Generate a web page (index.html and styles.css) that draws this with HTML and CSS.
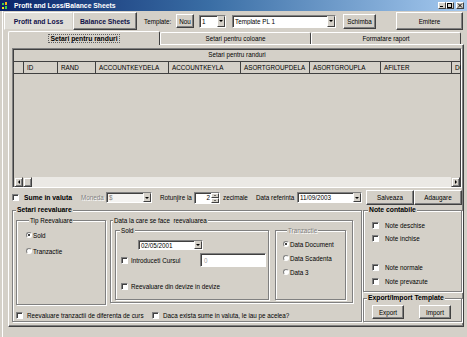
FILE: index.html
```html
<!DOCTYPE html>
<html lang="ro">
<head>
    <meta charset="UTF-8">
    <title>Profit and Loss/Balance Sheets</title>
    <link rel="stylesheet" href="styles.css">
</head>
<body>
<div class="window">
    <div class="titlebar">
        <svg class="app-icon" width="6" height="8" viewBox="0 0 6 8">
            <rect x="0" y="1" width="2" height="2" fill="#39d34a"/>
            <rect x="0" y="5" width="2" height="2" fill="#f2e21a"/>
            <rect x="3" y="0" width="2" height="3" fill="#f2b51a"/>
            <rect x="3" y="4" width="2" height="3" fill="#39d34a"/>
        </svg>
        <span class="title">Profit and Loss/Balance Sheets</span>
        <div class="win-controls">
            <span class="win-btn"><svg width="6" height="5" viewBox="0 0 6 5"><rect x="1" y="3" width="3" height="1" fill="#000"/></svg></span>
            <span class="win-btn"><svg width="6" height="5" viewBox="0 0 6 5"><rect x="0.5" y="0.5" width="4" height="4" fill="none" stroke="#000"/></svg></span>
            <span class="win-btn win-close"><svg width="6" height="5" viewBox="0 0 6 5"><path d="M1 0.5L5 4.5M5 0.5L1 4.5" stroke="#000" stroke-width="1"/></svg></span>
        </div>
    </div>

    <div class="toolbar">
        <button class="btn btn-pressed btn-profit">Profit and Loss</button>
        <button class="btn btn-balance">Balance Sheets</button>
        <span class="lbl lbl-template">Template:</span>
        <button class="btn btn-nou">Nou</button>
        <div class="combo combo-nr"><span class="combo-text">1</span><span class="drop"></span></div>
        <div class="combo combo-tpl"><span class="combo-text">Template PL 1</span><span class="drop"></span></div>
        <button class="btn btn-schimba">Schimba</button>
        <button class="btn btn-emitere">Emitere</button>
    </div>

    <div class="tabs">
        <div class="tab tab-active"><span class="tab-focus">Setari pentru randuri</span></div>
        <div class="tab tab-2">Setari pentru coloane</div>
        <div class="tab tab-3">Formatare raport</div>
    </div>

    <div class="panel">
        <div class="grid">
            <div class="grid-caption">Setari pentru randuri</div>
            <div class="grid-head">
                <div class="hc hc-ind"></div>
                <div class="hc hc-id">ID</div>
                <div class="hc hc-rand">RAND</div>
                <div class="hc hc-akd">ACCOUNTKEYDELA</div>
                <div class="hc hc-akl">ACCOUNTKEYLA</div>
                <div class="hc hc-agd">ASORTGROUPDELA</div>
                <div class="hc hc-agl">ASORTGROUPLA</div>
                <div class="hc hc-af">AFILTER</div>
                <div class="hc hc-do">DO</div>
            </div>
            <div class="grid-body"></div>
            <div class="hscroll">
                <span class="sb-btn"><span class="arrow-left"></span></span>
                <span class="sb-thumb"></span>
                <span class="sb-track"></span>
                <span class="sb-btn"><span class="arrow-right"></span></span>
            </div>
        </div>

        <div class="opts">
            <span class="chk"></span>
            <span class="bold lbl-sume">Sume in valuta</span>
            <span class="disabled lbl-moneda">Moneda</span>
            <div class="combo combo-off combo-moneda"><span class="combo-text">$</span><span class="drop"></span></div>
            <span class="lbl lbl-rot">Rotunjire la</span>
            <div class="spin"><span class="spin-text">2</span><span class="spin-btns"><span class="spin-up"></span><span class="spin-down"></span></span></div>
            <span class="lbl lbl-zec">zecimale</span>
            <span class="lbl lbl-data">Data referinta</span>
            <div class="combo combo-date"><span class="combo-text">11/09/2003</span><span class="drop"></span></div>
            <button class="btn btn-salveaza">Salveaza</button>
            <button class="btn btn-adaugare">Adaugare</button>
        </div>

        <div class="lower">
            <fieldset class="group reeval">
                <legend class="bold">Setari reevaluare</legend>
                <div class="reeval-top">
                    <fieldset class="group tip">
                        <legend>Tip Reevaluare</legend>
                        <div class="ropt"><span class="radio on"></span><span>Sold</span></div>
                        <div class="ropt"><span class="radio"></span><span>Tranzactie</span></div>
                    </fieldset>
                    <fieldset class="group dataf">
                        <legend>Data la care se face&nbsp; reevaluarea</legend>
                        <div class="dataf-inner">
                            <fieldset class="group sold">
                                <legend>Sold</legend>
                                <div class="combo combo-sold"><span class="combo-text">02/05/2001</span><span class="drop"></span></div>
                                <div class="sold-row">
                                    <span class="chk"></span>
                                    <span class="lbl-curs">Introduceti Cursul</span>
                                    <div class="field field-curs">0</div>
                                </div>
                                <div class="sold-row sold-row2">
                                    <span class="chk"></span>
                                    <span class="lbl-devize">Reevaluare din devize in devize</span>
                                </div>
                            </fieldset>
                            <fieldset class="group tranz">
                                <legend class="disabled">Tranzactie</legend>
                                <div class="ropt"><span class="radio on"></span><span>Data Document</span></div>
                                <div class="ropt"><span class="radio"></span><span>Data Scadenta</span></div>
                                <div class="ropt"><span class="radio"></span><span>Data 3</span></div>
                            </fieldset>
                        </div>
                    </fieldset>
                </div>
                <div class="reeval-bottom">
                    <div class="copt copt-diff"><span class="chk"></span><span>Reevaluare tranzactii de diferenta de curs</span></div>
                    <div class="copt"><span class="chk"></span><span>Daca exista sume in valuta, le iau pe acelea?</span></div>
                </div>
            </fieldset>

            <div class="side">
                <fieldset class="group note">
                    <legend class="bold">Note contabile</legend>
                    <div class="nopt n1"><span class="chk"></span><span>Note deschise</span></div>
                    <div class="nopt n2"><span class="chk"></span><span>Note inchise</span></div>
                    <div class="nopt n3"><span class="chk"></span><span>Note normale</span></div>
                    <div class="nopt n4"><span class="chk"></span><span>Note prevazute</span></div>
                </fieldset>
                <fieldset class="group expimp">
                    <legend class="bold">Export/Import Template</legend>
                    <div class="expimp-btns">
                        <button class="btn btn-small">Export</button>
                        <button class="btn btn-small">Import</button>
                    </div>
                </fieldset>
            </div>
        </div>
    </div>
</div>
</body>
</html>
```

FILE: styles.css
```css
* {
    box-sizing: border-box;
}
body {
    margin: 0;
    background-color: #d4d0c8;
    font-family: "Liberation Sans", Arial, sans-serif;
    font-size: 6.3px;
    color: #000;
}
.window {
    width: 467px;
    height: 337px;
    overflow: hidden;
    background: #d4d0c8;
    box-shadow: inset 2px 0 #d4d0c8, inset 3px 0 #fff;
}
.bold {
    font-weight: bold;
    font-size: 6.8px;
}
.disabled {
    color: #808080;
    text-shadow: 1px 1px #fff;
}

/* title bar */
.titlebar {
    height: 11px;
    display: flex;
    align-items: center;
    padding-left: 2px;
    background: linear-gradient(to right, #0a246a, #3a6ea5 45%, #a6caf0);
    color: #fff;
}
.app-icon {
    margin-right: 6px;
}
.title {
    font-weight: bold;
    font-size: 6.8px;
}
.win-controls {
    margin-left: auto;
    margin-right: 3px;
    display: flex;
}
.win-btn {
    width: 8px;
    height: 7px;
    background: #d4d0c8;
    border: 1px solid;
    border-color: #fff #404040 #404040 #fff;
    display: flex;
    align-items: center;
    justify-content: center;
}
.win-close {
    margin-left: 2px;
}

/* buttons, combos */
.btn {
    font: inherit;
    color: #000;
    background: #d4d0c8;
    border: 1px solid;
    border-color: #fff #404040 #404040 #fff;
    box-shadow: inset -1px -1px #808080;
    padding: 0;
    display: flex;
    align-items: center;
    justify-content: center;
    flex: none;
}
.btn-pressed {
    background: #e0ded8;
    border-color: #fff #d4d0c8 #d4d0c8 #fff;
    box-shadow: none;
}
.combo, .spin, .field {
    display: flex;
    align-items: center;
    background: #fff;
    border: 1px solid;
    border-color: #808080 #fff #fff #808080;
    box-shadow: inset 1px 1px #404040;
    flex: none;
}
.combo-text {
    flex: 1;
    padding-left: 2px;
    white-space: nowrap;
    overflow: hidden;
}
.drop {
    width: 8px;
    height: 100%;
    background: #d4d0c8;
    border: 1px solid;
    border-color: #d4d0c8 #404040 #404040 #fff;
    display: flex;
    align-items: center;
    justify-content: center;
}
.drop::after {
    content: "";
    border-left: 2px solid transparent;
    border-right: 2px solid transparent;
    border-top: 2px solid #000;
}
.combo-off {
    background: #f4f3f1;
    color: #808080;
}
.chk {
    width: 7px;
    height: 7px;
    background: #fff;
    border: 1px solid;
    border-color: #808080 #fff #fff #808080;
    box-shadow: inset 1px 1px #404040;
    flex: none;
}
.radio {
    width: 6px;
    height: 6px;
    border-radius: 50%;
    background: #fff;
    border: 1px solid;
    border-color: #808080 #fff #fff #808080;
    display: flex;
    align-items: center;
    justify-content: center;
    flex: none;
}
.radio.on::after {
    content: "";
    width: 2px;
    height: 2px;
    border-radius: 50%;
    background: #000;
}

/* toolbar */
.toolbar {
    display: flex;
    align-items: center;
    height: 20px;
    padding-left: 4px;
}
.btn-profit, .btn-balance {
    height: 18px;
    font-weight: bold;
    font-size: 6.8px;
    color: #101048;
}
.btn-profit {
    width: 69px;
}
.btn-balance {
    width: 64px;
}
.lbl-template {
    margin-left: 7px;
    width: 32px;
}
.btn-nou {
    width: 18px;
    height: 14px;
}
.combo-nr {
    margin-left: 5px;
    width: 27px;
    height: 13px;
}
.combo-tpl {
    margin-left: 6px;
    width: 104px;
    height: 13px;
}
.btn-schimba {
    margin-left: 7px;
    width: 33px;
    height: 15px;
}
.btn-emitere {
    margin-left: 20px;
    width: 67px;
    height: 18px;
}

/* tabs */
.tabs {
    display: flex;
    align-items: flex-end;
    height: 13px;
    padding-left: 8px;
}
.tab {
    height: 12px;
    border: 1px solid;
    border-color: #fff #404040 transparent #fff;
    border-bottom: 0;
    border-radius: 2px 2px 0 0;
    display: flex;
    align-items: center;
    justify-content: center;
}
.tab-active {
    width: 152px;
    height: 14px;
    margin-bottom: -1px;
    position: relative;
    z-index: 1;
    background: #d4d0c8;
}
.tab-focus {
    font-weight: bold;
    font-size: 6.8px;
    padding: 0 1px;
    outline: 1px dotted #606060;
}
.tab-2 {
    width: 151px;
}
.tab-3 {
    width: 150px;
}

/* panel */
.panel {
    margin-left: 8px;
    width: 456px;
    height: 283px;
    border: 1px solid;
    border-color: #fff #404040 #404040 #fff;
    box-shadow: inset -1px -1px #808080;
    padding: 3px 0 0 3px;
}

/* grid */
.grid {
    width: 450px;
    height: 140px;
    border: 1px solid;
    border-color: #808080 #fff #fff #808080;
    box-shadow: inset 1px 1px #404040, inset -1px 0 #404040;
    display: flex;
    flex-direction: column;
}
.grid-caption {
    height: 12px;
    line-height: 12px;
    text-align: center;
}
.grid-head {
    display: flex;
    height: 13px;
    border-top: 1px solid #404040;
    border-bottom: 1px solid #404040;
}
.hc {
    flex: none;
    border-left: 1px solid #404040;
    padding-left: 3px;
    line-height: 11px;
    white-space: nowrap;
    overflow: hidden;
}
.hc-ind {
    width: 10px;
    border-left: 0;
}
.hc-id { width: 34px; }
.hc-rand { width: 38px; }
.hc-akd { width: 73px; }
.hc-akl { width: 72px; }
.hc-agd { width: 69px; }
.hc-agl { width: 71px; }
.hc-af { width: 71px; }
.hc-do { flex: 1; }
.grid-body {
    flex: 1;
}
.hscroll {
    display: flex;
    height: 10px;
    padding-left: 1px;
    padding-right: 1px;
}
.sb-btn, .sb-thumb {
    width: 9px;
    background: #d4d0c8;
    border: 1px solid;
    border-color: #d4d0c8 #404040 #404040 #d4d0c8;
    box-shadow: inset 1px 1px #fff, inset -1px -1px #808080;
    display: flex;
    align-items: center;
    justify-content: center;
}
.sb-track {
    flex: 1;
    background: #ebe9e5;
}
.arrow-left {
    border-top: 2px solid transparent;
    border-bottom: 2px solid transparent;
    border-right: 2px solid #000;
}
.arrow-right {
    border-top: 2px solid transparent;
    border-bottom: 2px solid transparent;
    border-left: 2px solid #000;
}

/* options row */
.opts {
    display: flex;
    align-items: center;
    height: 15px;
    margin-top: 2px;
}
.lbl-sume {
    margin-left: 5px;
    width: 57px;
}
.lbl-moneda {
    width: 25px;
}
.combo-moneda {
    width: 46px;
    height: 11px;
}
.lbl-rot {
    margin-left: 8px;
    width: 34px;
}
.spin {
    width: 26px;
    height: 12px;
}
.spin-text {
    flex: 1;
    text-align: right;
    padding-right: 1px;
}
.spin-btns {
    width: 8px;
    height: 100%;
    display: flex;
    flex-direction: column;
}
.spin-up, .spin-down {
    flex: 1;
    background: #d4d0c8;
    border: 1px solid;
    border-color: #fff #404040 #404040 #fff;
    display: flex;
    align-items: center;
    justify-content: center;
}
.spin-up::after {
    content: "";
    border-left: 1.5px solid transparent;
    border-right: 1.5px solid transparent;
    border-bottom: 1.5px solid #000;
}
.spin-down::after {
    content: "";
    border-left: 1.5px solid transparent;
    border-right: 1.5px solid transparent;
    border-top: 1.5px solid #000;
}
.lbl-zec {
    margin-left: 3px;
    width: 30px;
}
.lbl-data {
    margin-left: 3px;
    width: 41px;
}
.combo-date {
    width: 65px;
    height: 11px;
}
.btn-salveaza {
    margin-left: 4px;
    width: 48px;
    height: 15px;
}
.btn-adaugare {
    width: 48px;
    height: 15px;
}

/* group boxes */
.group {
    margin: 0;
    padding: 0;
    min-width: 0;
    border: 1px solid #808080;
    box-shadow: inset 1px 1px #fff, 1px 1px #fff;
}
.group legend {
    padding: 0 1px;
    margin-left: 3px;
    line-height: 7px;
    background: #d4d0c8;
    white-space: nowrap;
}
.group legend.bold {
    line-height: 8px;
}
.lower {
    display: flex;
    margin-top: 1px;
}
.reeval {
    width: 350px;
    height: 116px;
    flex: none;
}
.reeval-top {
    display: flex;
    padding-left: 3px;
    margin-top: 3px;
}
.tip {
    width: 90px;
    height: 88px;
    padding: 5px 0 0 9px;
}
.ropt {
    display: flex;
    align-items: center;
    gap: 1px;
    height: 12px;
    margin-bottom: 4px;
}
.dataf {
    margin-left: 4px;
    width: 243px;
    height: 86px;
}
.dataf legend {
    margin-left: 2px;
}
.dataf-inner {
    display: flex;
    padding: 3px 0 0 4px;
}
.sold {
    width: 154px;
    height: 73px;
}
.sold legend, .tranz legend {
    margin-left: 4px;
}
.combo-sold {
    margin: 6px 0 0 22px;
    width: 65px;
    height: 10px;
}
.sold-row {
    display: flex;
    align-items: center;
    height: 14px;
    margin-top: 3px;
    padding-left: 5px;
}
.sold-row2 {
    height: 10px;
    margin-top: 14px;
}
.lbl-curs {
    margin-left: 3px;
    width: 69px;
}
.lbl-devize {
    margin-left: 3px;
}
.field-curs {
    width: 66px;
    height: 14px;
    padding-left: 3px;
    color: #a0a0a0;
}
.tranz {
    margin-left: 6px;
    width: 71px;
    height: 73px;
    padding: 4px 0 0 7px;
}
.tranz .ropt {
    margin-bottom: 2px;
}
.reeval-bottom {
    display: flex;
    align-items: center;
    height: 10px;
    margin-top: 5px;
    padding-left: 3px;
}
.copt {
    display: flex;
    align-items: center;
    gap: 4px;
}
.copt-diff {
    width: 136px;
}

/* right column */
.side {
    margin-left: 1px;
    width: 99px;
    display: flex;
    flex-direction: column;
}
.note {
    height: 86px;
}
.note legend {
    margin-left: 4px;
}
.nopt {
    display: flex;
    align-items: center;
    gap: 6px;
    height: 10px;
    padding-left: 8px;
}
.n1 { margin-top: 6px; }
.n2 { margin-top: 3px; }
.n3 { margin-top: 19px; }
.n4 { margin-top: 4px; }
.expimp {
    margin-top: 2px;
    height: 28px;
}
.expimp legend {
    margin-left: 3px;
}
.expimp-btns {
    display: flex;
    gap: 15px;
    padding: 3px 0 0 8px;
}
.btn-small {
    width: 32px;
    height: 14px;
}
```
